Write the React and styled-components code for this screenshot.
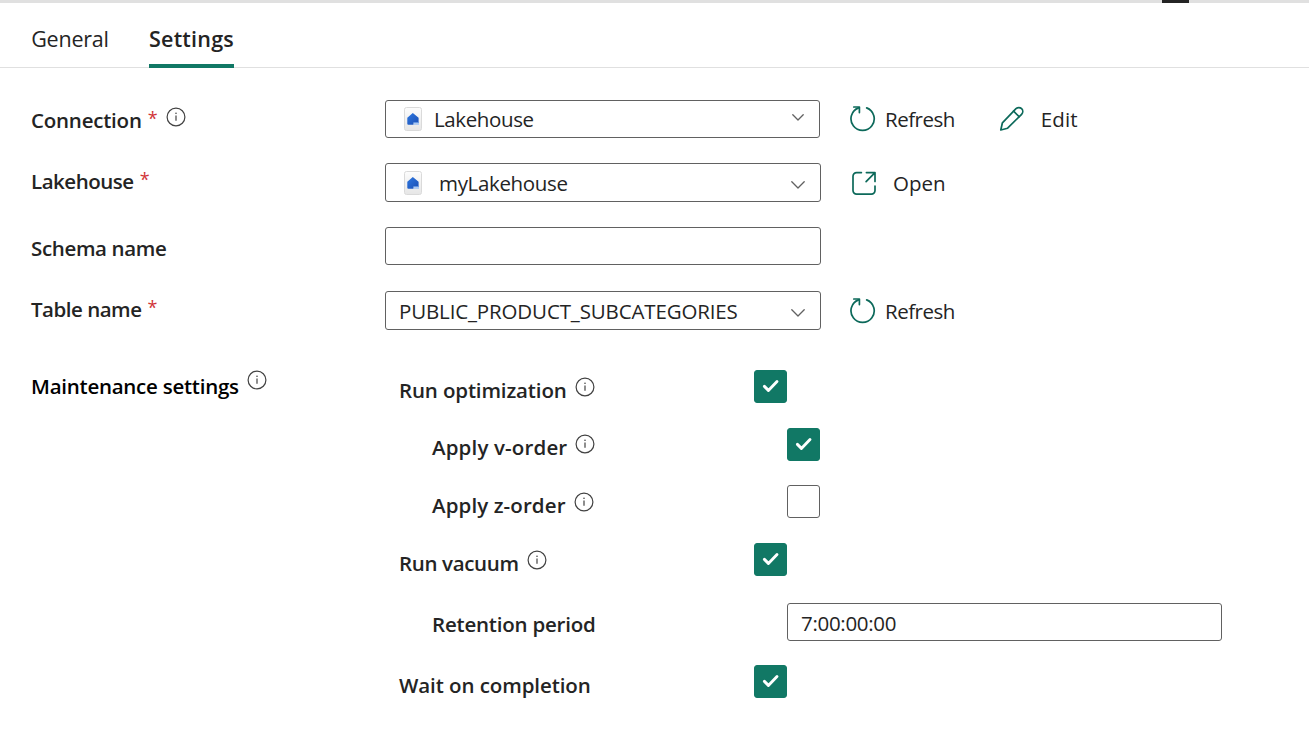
import React, { useState } from 'react';
import styled, { createGlobalStyle, css } from 'styled-components';

const GlobalStyle = createGlobalStyle`
  * {
    box-sizing: border-box;
  }
  body {
    margin: 0;
    background: #fff;
    color: #242424;
    font-family: 'Open Sans', 'Noto Sans', sans-serif;
    font-size: 20.5px;
    line-height: 28px;
    overflow: hidden;
  }
  button {
    font: inherit;
    color: inherit;
    background: none;
    border: 0;
    padding: 0;
  }
`;

const Panel = styled.div`
  width: 1309px;
  height: 735px;
  overflow: hidden;
`;

const Splitter = styled.div`
  display: flex;
  height: 3px;
  padding-left: 1162px;
  background: #e0e0e0;
`;

const Grip = styled.div`
  width: 27px;
  background: #242424;
`;

const Tabs = styled.div`
  display: flex;
  gap: 40px;
  height: 65px;
  padding-left: 31px;
  border-bottom: 1px solid #e0e0e0;
`;

const Tab = styled.button`
  height: 65px;
  padding-top: 8px;
  display: flex;
  justify-content: center;
  font-size: 21.5px;
  line-height: 56px;
  white-space: nowrap;
  width: ${({ $width }) => $width}px;
  letter-spacing: ${({ $track }) => $track}px;
  ${({ $active }) =>
    $active &&
    css`
      font-weight: 600;
      border-bottom: 4px solid #117865;
    `}
`;

const Form = styled.div`
  display: flex;
  flex-direction: column;
  padding: 32px 0 0 31px;
`;

const Row = styled.div`
  display: grid;
  grid-template-columns: 354px auto 1fr;
  height: ${({ $height }) => $height}px;
  margin-bottom: ${({ $gap }) => $gap}px;
`;

const LabelBox = styled.div`
  display: flex;
  align-items: flex-start;
  height: 28px;
  margin-top: ${({ $top }) => $top}px;
`;

const Text = styled.span`
  white-space: nowrap;
  letter-spacing: ${({ $track = 0 }) => $track}px;
`;

const LabelText = styled(Text)`
  font-weight: 600;
  color: ${({ $dark }) => ($dark ? '#000' : '#242424')};
`;

const Required = styled.span`
  width: 10px;
  margin: -2px 0 0 6px;
  color: #d13438;
  font-size: 18px;
`;

const InfoSvg = styled.svg`
  flex: none;
  width: 20px;
  height: 20px;
  margin: ${({ $lift = 0 }) => 0.5 - $lift}px 0 0 8px;
`;

const Field = styled.div`
  display: flex;
  align-items: center;
  width: ${({ $width = 436 }) => $width}px;
  height: ${({ $height }) => $height}px;
  padding: ${({ $drop = 0 }) => $drop}px 15px 0 ${({ $icon }) => ($icon ? 18 : 13)}px;
  border: 1px solid #616161;
  border-radius: 3px;
`;

const Value = styled(Text)`
  flex: 1;
  margin-left: ${({ $indent = 0 }) => $indent}px;
`;

const ChevronSvg = styled.svg`
  flex: none;
  width: ${({ $size }) => $size}px;
  height: 10px;
  margin-top: ${({ $drop }) => $drop}px;
`;

const Actions = styled.div`
  display: flex;
  align-items: center;
  height: 38px;
  padding-left: ${({ $left = 29 }) => $left}px;
  padding-top: ${({ $drop = 0 }) => $drop}px;
`;

const Action = styled.button`
  display: flex;
  align-items: center;
  gap: ${({ $gap }) => $gap}px;
  margin-right: 44px;

  svg {
    flex: none;
    width: 26px;
    height: 26px;
    fill: none;
    stroke: #0c695a;
    stroke-width: 1.7;
    stroke-linecap: round;
    stroke-linejoin: round;
  }
`;

const Settings = styled.div`
  display: flex;
  flex-direction: column;
  margin-left: 14px;
`;

const Setting = styled.div`
  display: grid;
  grid-template-columns: 355px auto;
  height: ${({ $height }) => $height}px;
  padding-left: ${({ $nested }) => ($nested ? 33 : 0)}px;
`;

const Check = styled.button`
  display: flex;
  width: 33px;
  height: 33px;
  border-radius: 3px;
  border: 1px solid ${({ $on }) => ($on ? '#117865' : '#616161')};
  background: ${({ $on }) => ($on ? '#117865' : '#fff')};
`;

const InfoIcon = ({ lift }) => (
  <InfoSvg $lift={lift} viewBox="0 0 20 20" fill="none" stroke="#424242">
    <circle cx="10" cy="10" r="8.9" strokeWidth="1.2" />
    <path d="M10 8.6v5.2" strokeWidth="1.2" />
    <circle cx="10" cy="6.3" r=".8" fill="#424242" stroke="none" />
  </InfoSvg>
);

const Chevron = ({ size = 14, drop = 0 }) => (
  <ChevronSvg $size={size} $drop={drop} viewBox={`0 0 ${size} 10`} fill="none" stroke="#616161">
    <path
      d={`M.8 1.8 L${size / 2} ${size / 2 + 1} L${size - 0.8} 1.8`}
      strokeWidth="1.3"
      strokeLinecap="round"
      strokeLinejoin="round"
    />
  </ChevronSvg>
);

const LakehouseIcon = () => (
  <svg width="18" height="24" viewBox="0 0 18 24">
    <defs>
      <linearGradient id="card" x1="0" y1="0" x2="0" y2="1">
        <stop offset="0" stopColor="#fdfdfd" />
        <stop offset="1" stopColor="#e6e6e6" />
      </linearGradient>
      <linearGradient id="house" x1="0" y1="0" x2="1" y2="1">
        <stop offset="0" stopColor="#2f78e0" />
        <stop offset="1" stopColor="#1b4fb5" />
      </linearGradient>
    </defs>
    <rect x=".5" y=".5" width="17" height="23" rx="2" fill="url(#card)" stroke="#dadada" />
    <path d="M8.800 6 14.600 10.800v4.600H9.600v2.400H4.300a1 1 0 0 1-1-1v-6z" fill="url(#house)" />
    <path d="M9.600 15.200h5.400v1.200H9.600z" fill="#5b93e6" />
    <path d="M9.600 16.600h5.400v1.300H9.600z" fill="#a9c8f3" />
  </svg>
);

const RefreshIcon = () => (
  <svg viewBox="0 0 26 26">
    <path d="M16.7 1.9a11.6 11.6 0 1 1-8.2 0" />
    <path d="M3.8 1h5.6v5.6" />
  </svg>
);

const EditIcon = () => (
  <svg viewBox="0 0 26 26">
    <path d="M17 2.7a3.9 3.9 0 0 1 5.6 5.6L8.6 22.2 1.8 24l1.6-7.2z" />
    <path d="M14.6 5.2l5.5 5.5" />
  </svg>
);

const OpenIcon = () => (
  <svg viewBox="0 -1 26 26">
    <path d="M10.4 1.6H5.6A3.6 3.6 0 0 0 2 5.2v14.4a3.6 3.6 0 0 0 3.6 3.6h14.8a3.6 3.6 0 0 0 3.6-3.6V15" />
    <path d="M15.4 1.6H24v8.8M24 1.6l-8.9 9" />
  </svg>
);

const Label = ({ text, track, top, required, info, dark, lift }) => (
  <LabelBox $top={top}>
    <LabelText $track={track} $dark={dark}>
      {text}
    </LabelText>
    {required && <Required>*</Required>}
    {info && <InfoIcon lift={lift} />}
  </LabelBox>
);

const Checkbox = ({ initial = false }) => {
  const [on, setOn] = useState(initial);
  return (
    <Check $on={on} onClick={() => setOn(!on)} role="checkbox" aria-checked={on}>
      {on && (
        <svg width="31" height="31" viewBox="0 0 31 31" fill="none" stroke="#fff">
          <path d="M9.4 15.4l4 4 8.600-8.800" strokeWidth="2.900" strokeLinecap="round" strokeLinejoin="round" />
        </svg>
      )}
    </Check>
  );
};

const RefreshAction = () => (
  <Action $gap={9}>
    <RefreshIcon />
    <Text $track={-0.5}>Refresh</Text>
  </Action>
);

const App = () => (
  <>
    <GlobalStyle />
    <Panel>
      <Splitter>
        <Grip />
      </Splitter>
      <Tabs>
        <Tab $width={78} $track={-0.2}>
          General
        </Tab>
        <Tab $active $width={85} $track={0.2}>
          Settings
        </Tab>
      </Tabs>
      <Form>
        <Row $height={38} $gap={25}>
          <Label text="Connection" track={-0.22} top={6} required info />
          <Field $width={435} $height={38} $icon>
            <LakehouseIcon />
            <Value $indent={12} $track={-0.38}>
              Lakehouse
            </Value>
            <Chevron size={12} drop={-2} />
          </Field>
          <Actions $left={30}>
            <RefreshAction />
            <Action $gap={16}>
              <EditIcon />
              <Text $track={0.1}>Edit</Text>
            </Action>
          </Actions>
        </Row>
        <Row $height={39} $gap={25}>
          <Label text="Lakehouse" track={-0.48} top={4} required />
          <Field $height={39} $icon>
            <LakehouseIcon />
            <Value $indent={17} $track={-0.34}>
              myLakehouse
            </Value>
            <Chevron drop={4} />
          </Field>
          <Actions $left={30} $drop={1}>
            <Action $gap={16}>
              <OpenIcon />
              <Text>Open</Text>
            </Action>
          </Actions>
        </Row>
        <Row $height={38} $gap={26}>
          <Label text="Schema name" track={-0.35} top={7} />
          <Field $height={38} />
        </Row>
        <Row $height={39} $gap={40}>
          <Label text="Table name" track={-0.49} top={4} required />
          <Field $height={39} $drop={1}>
            <Value $track={-0.14}>PUBLIC_PRODUCT_SUBCATEGORIES</Value>
            <Chevron drop={4} />
          </Field>
          <Actions $drop={1}>
            <RefreshAction />
          </Actions>
        </Row>
        <Row $height={330} $gap={0}>
          <Label text="Maintenance settings" track={-0.25} top={2} lift={3} dark info />
          <Settings>
            <Setting $height={58}>
              <Label text="Run optimization" track={-0.14} top={6} info />
              <Checkbox initial />
            </Setting>
            <Setting $height={57} $nested>
              <Label text="Apply v-order" track={0.15} top={5} info />
              <Checkbox initial />
            </Setting>
            <Setting $height={58} $nested>
              <Label text="Apply z-order" track={0.1} top={6} info />
              <Checkbox />
            </Setting>
            <Setting $height={60}>
              <Label text="Run vacuum" track={-0.35} top={6} info />
              <Checkbox initial />
            </Setting>
            <Setting $height={62} $nested>
              <Label text="Retention period" track={-0.21} top={7} />
              <Field $width={435} $height={38} $drop={1}>
                <Value $track={-0.3}>7:00:00:00</Value>
              </Field>
            </Setting>
            <Setting $height={33}>
              <Label text="Wait on completion" track={-0.08} top={6} />
              <Checkbox initial />
            </Setting>
          </Settings>
        </Row>
      </Form>
    </Panel>
  </>
);

export default App;
